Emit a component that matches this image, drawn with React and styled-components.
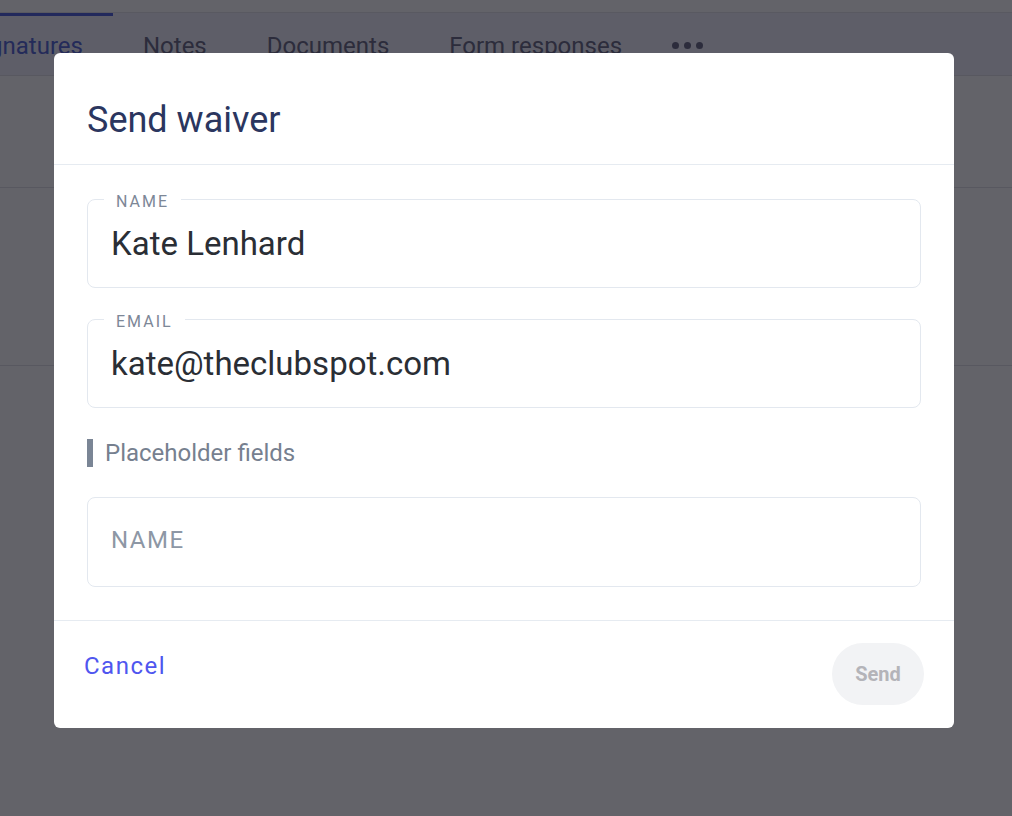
import styled, { createGlobalStyle } from 'styled-components'

const GlobalStyle = createGlobalStyle`
  html, body {
    margin: 0;
    padding: 0;
  }
  body {
    font-family: Roboto, "Liberation Sans", sans-serif;
    background: #fff;
  }
  * {
    box-sizing: border-box;
  }
`

const Page = styled.div`
  position: relative;
  width: 1012px;
  height: 816px;
  overflow: hidden;
  background: #fff;
`

const TopStrip = styled.div`
  height: 13px;
  background: #fff;
  border-bottom: 1px solid #e4e5ea;
`

const TabBar = styled.nav`
  display: flex;
  height: 63px;
  margin-left: -61px;
  background: #f1f2fb;
  border-bottom: 1px solid #e2e3e8;
`

const Tab = styled.div`
  display: flex;
  align-items: center;
  padding: 0 30px;
  font-size: 24px;
  white-space: nowrap;
  color: ${p => (p.$active ? '#5a6cd6' : '#6f7088')};
  border-top: 3px solid ${p => (p.$active ? '#5566dd' : 'transparent')};
`

const Dots = styled.div`
  display: flex;
  align-items: center;
  gap: 5px;
  margin-left: 20px;
  padding-top: 3px;

  span {
    width: 7px;
    height: 7px;
    border-radius: 50%;
    background: #6f7088;
  }
`

const Row = styled.div`
  height: ${p => p.$h}px;
  border-bottom: 1px solid #e2e3e6;
`

const Overlay = styled.div`
  position: absolute;
  inset: 0;
  display: flex;
  align-items: flex-start;
  padding: 53px 0 0 54px;
  background: rgba(3, 3, 13, 0.62);
`

const Modal = styled.div`
  width: 900px;
  background: #fff;
  border-radius: 6px;
  overflow: hidden;
`

const Header = styled.div`
  height: 112px;
  padding: 46px 33px 0;
  border-bottom: 1px solid #e6ebf1;
`

const Title = styled.h2`
  margin: 0;
  font-size: 36px;
  font-weight: 400;
  line-height: 42px;
  color: #2b365f;
`

const Body = styled.div`
  display: flex;
  flex-direction: column;
  padding: 23px 33px 33px;
`

const Field = styled.fieldset`
  margin: 0 0 ${p => p.$gap || 0}px;
  padding: 0;
  min-width: 0;
  border: 1px solid #e3e8ef;
  border-radius: 8px;
`

const Legend = styled.legend`
  margin-left: 16px;
  padding: 6px 12px 0;
  font-size: 16px;
  line-height: 16px;
  letter-spacing: 2px;
  color: #7d8797;
`

const Value = styled.div`
  height: 77px;
  padding: 15px 23px 0;
  font-size: 33px;
  line-height: 38px;
  color: #2a2e35;
`

const SectionTitle = styled.div`
  margin: 31px 0 30px;
  height: 28px;
  padding-left: 12px;
  border-left: 6px solid #7a8595;
  font-size: 24px;
  line-height: 28px;
  color: #76808f;
`

const PlaceholderBox = styled.div`
  display: flex;
  align-items: center;
  height: 90px;
  padding: 0 23px 4px;
  border: 1px solid #e3e8ef;
  border-radius: 8px;
  font-size: 24px;
  letter-spacing: 1.5px;
  color: #8d97a5;
`

const Footer = styled.div`
  display: flex;
  justify-content: space-between;
  align-items: flex-start;
  padding: 22px 30px 23px;
  border-top: 1px solid #e6ebf1;
`

const CancelButton = styled.button`
  margin-top: 9px;
  padding: 0;
  border: none;
  background: none;
  font-family: inherit;
  font-size: 24px;
  line-height: 28px;
  letter-spacing: 1.5px;
  color: #4f56ef;
  cursor: pointer;
`

const SendButton = styled.button`
  width: 92px;
  height: 62px;
  border: none;
  border-radius: 31px;
  background: #f2f3f5;
  font-family: inherit;
  font-size: 20px;
  font-weight: 700;
  color: #b4b4b9;
`

function App() {
  return (
    <Page>
      <GlobalStyle />
      <TopStrip />
      <TabBar>
        <Tab $active>Signatures</Tab>
        <Tab>Notes</Tab>
        <Tab>Documents</Tab>
        <Tab>Form responses</Tab>
        <Dots>
          <span />
          <span />
          <span />
        </Dots>
      </TabBar>
      <Row $h={112} />
      <Row $h={178} />

      <Overlay>
        <Modal>
          <Header>
            <Title>Send waiver</Title>
          </Header>
          <Body>
            <Field $gap={20}>
              <Legend>NAME</Legend>
              <Value>Kate Lenhard</Value>
            </Field>
            <Field>
              <Legend>EMAIL</Legend>
              <Value>kate@theclubspot.com</Value>
            </Field>
            <SectionTitle>Placeholder fields</SectionTitle>
            <PlaceholderBox>NAME</PlaceholderBox>
          </Body>
          <Footer>
            <CancelButton>Cancel</CancelButton>
            <SendButton>Send</SendButton>
          </Footer>
        </Modal>
      </Overlay>
    </Page>
  )
}

export default App
